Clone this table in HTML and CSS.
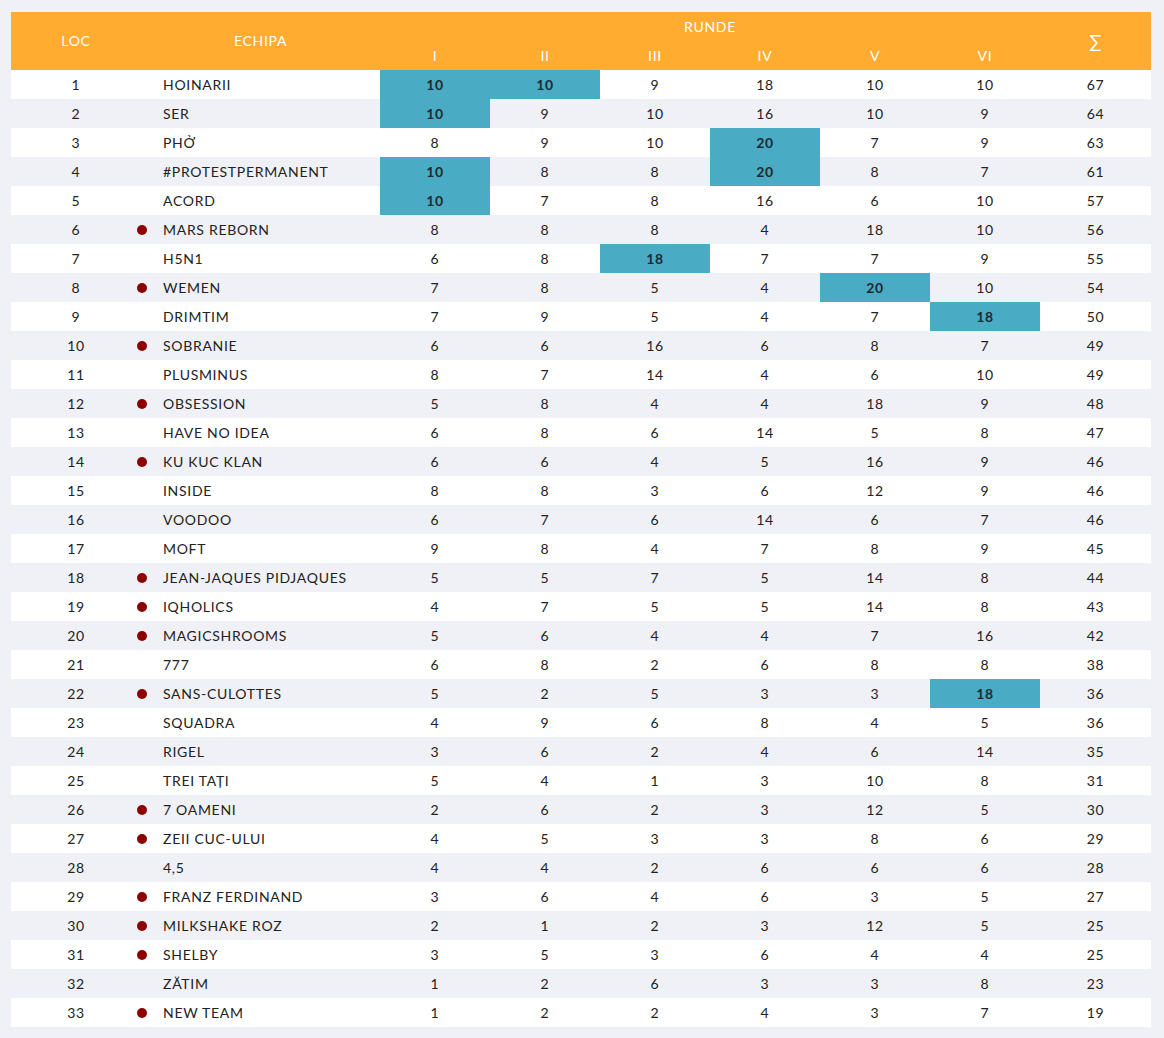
FILE: index.html
```html
<!DOCTYPE html>
<html>
<head>
<meta charset="utf-8">
<link rel="stylesheet" href="styles.css">
</head>
<body>
<table class="standings">
<colgroup>
<col class="c-loc"><col class="c-team"><col class="c-r"><col class="c-r"><col class="c-r"><col class="c-r"><col class="c-r"><col class="c-r"><col class="c-sum">
</colgroup>
<thead>
<tr><th rowspan="2">LOC</th><th rowspan="2">ECHIPA</th><th colspan="6" class="runde">RUNDE</th><th rowspan="2" class="sigma">∑</th></tr>
<tr class="rn"><th>I</th><th>II</th><th>III</th><th>IV</th><th>V</th><th>VI</th></tr>
</thead>
<tbody>
<tr><td>1</td><td class="team">HOINARII</td><td class="hl">10</td><td class="hl">10</td><td>9</td><td>18</td><td>10</td><td>10</td><td>67</td></tr>
<tr><td>2</td><td class="team">SER</td><td class="hl">10</td><td>9</td><td>10</td><td>16</td><td>10</td><td>9</td><td>64</td></tr>
<tr><td>3</td><td class="team">PHỞ</td><td>8</td><td>9</td><td>10</td><td class="hl">20</td><td>7</td><td>9</td><td>63</td></tr>
<tr><td>4</td><td class="team">#PROTESTPERMANENT</td><td class="hl">10</td><td>8</td><td>8</td><td class="hl">20</td><td>8</td><td>7</td><td>61</td></tr>
<tr><td>5</td><td class="team">ACORD</td><td class="hl">10</td><td>7</td><td>8</td><td>16</td><td>6</td><td>10</td><td>57</td></tr>
<tr><td>6</td><td class="team dot">MARS REBORN</td><td>8</td><td>8</td><td>8</td><td>4</td><td>18</td><td>10</td><td>56</td></tr>
<tr><td>7</td><td class="team">H5N1</td><td>6</td><td>8</td><td class="hl">18</td><td>7</td><td>7</td><td>9</td><td>55</td></tr>
<tr><td>8</td><td class="team dot">WEMEN</td><td>7</td><td>8</td><td>5</td><td>4</td><td class="hl">20</td><td>10</td><td>54</td></tr>
<tr><td>9</td><td class="team">DRIMTIM</td><td>7</td><td>9</td><td>5</td><td>4</td><td>7</td><td class="hl">18</td><td>50</td></tr>
<tr><td>10</td><td class="team dot">SOBRANIE</td><td>6</td><td>6</td><td>16</td><td>6</td><td>8</td><td>7</td><td>49</td></tr>
<tr><td>11</td><td class="team">PLUSMINUS</td><td>8</td><td>7</td><td>14</td><td>4</td><td>6</td><td>10</td><td>49</td></tr>
<tr><td>12</td><td class="team dot">OBSESSION</td><td>5</td><td>8</td><td>4</td><td>4</td><td>18</td><td>9</td><td>48</td></tr>
<tr><td>13</td><td class="team">HAVE NO IDEA</td><td>6</td><td>8</td><td>6</td><td>14</td><td>5</td><td>8</td><td>47</td></tr>
<tr><td>14</td><td class="team dot">KU KUC KLAN</td><td>6</td><td>6</td><td>4</td><td>5</td><td>16</td><td>9</td><td>46</td></tr>
<tr><td>15</td><td class="team">INSIDE</td><td>8</td><td>8</td><td>3</td><td>6</td><td>12</td><td>9</td><td>46</td></tr>
<tr><td>16</td><td class="team">VOODOO</td><td>6</td><td>7</td><td>6</td><td>14</td><td>6</td><td>7</td><td>46</td></tr>
<tr><td>17</td><td class="team">MOFT</td><td>9</td><td>8</td><td>4</td><td>7</td><td>8</td><td>9</td><td>45</td></tr>
<tr><td>18</td><td class="team dot">JEAN-JAQUES PIDJAQUES</td><td>5</td><td>5</td><td>7</td><td>5</td><td>14</td><td>8</td><td>44</td></tr>
<tr><td>19</td><td class="team dot">IQHOLICS</td><td>4</td><td>7</td><td>5</td><td>5</td><td>14</td><td>8</td><td>43</td></tr>
<tr><td>20</td><td class="team dot">MAGICSHROOMS</td><td>5</td><td>6</td><td>4</td><td>4</td><td>7</td><td>16</td><td>42</td></tr>
<tr><td>21</td><td class="team">777</td><td>6</td><td>8</td><td>2</td><td>6</td><td>8</td><td>8</td><td>38</td></tr>
<tr><td>22</td><td class="team dot">SANS-CULOTTES</td><td>5</td><td>2</td><td>5</td><td>3</td><td>3</td><td class="hl">18</td><td>36</td></tr>
<tr><td>23</td><td class="team">SQUADRA</td><td>4</td><td>9</td><td>6</td><td>8</td><td>4</td><td>5</td><td>36</td></tr>
<tr><td>24</td><td class="team">RIGEL</td><td>3</td><td>6</td><td>2</td><td>4</td><td>6</td><td>14</td><td>35</td></tr>
<tr><td>25</td><td class="team">TREI TAȚI</td><td>5</td><td>4</td><td>1</td><td>3</td><td>10</td><td>8</td><td>31</td></tr>
<tr><td>26</td><td class="team dot">7 OAMENI</td><td>2</td><td>6</td><td>2</td><td>3</td><td>12</td><td>5</td><td>30</td></tr>
<tr><td>27</td><td class="team dot">ZEII CUC-ULUI</td><td>4</td><td>5</td><td>3</td><td>3</td><td>8</td><td>6</td><td>29</td></tr>
<tr><td>28</td><td class="team">4,5</td><td>4</td><td>4</td><td>2</td><td>6</td><td>6</td><td>6</td><td>28</td></tr>
<tr><td>29</td><td class="team dot">FRANZ FERDINAND</td><td>3</td><td>6</td><td>4</td><td>6</td><td>3</td><td>5</td><td>27</td></tr>
<tr><td>30</td><td class="team dot">MILKSHAKE ROZ</td><td>2</td><td>1</td><td>2</td><td>3</td><td>12</td><td>5</td><td>25</td></tr>
<tr><td>31</td><td class="team dot">SHELBY</td><td>3</td><td>5</td><td>3</td><td>6</td><td>4</td><td>4</td><td>25</td></tr>
<tr><td>32</td><td class="team">ZĂTIM</td><td>1</td><td>2</td><td>6</td><td>3</td><td>3</td><td>8</td><td>23</td></tr>
<tr><td>33</td><td class="team dot">NEW TEAM</td><td>1</td><td>2</td><td>2</td><td>4</td><td>3</td><td>7</td><td>19</td></tr>
</tbody>
</table>
</body>
</html>
```

FILE: styles.css
```css
html, body {
  margin: 0;
  padding: 0;
  background: #f0f1f6;
}
body {
  padding: 12px 13px 11px 11px;
  font-family: Lato, "Open Sans", sans-serif;
  font-size: 14px;
  color: #222;
}
.standings {
  border-collapse: collapse;
  border-spacing: 0;
  table-layout: fixed;
  width: 1140px;
}
.c-loc { width: 130px; }
.c-team { width: 239px; }
.c-r { width: 110px; }
.c-sum { width: 111px; }
.standings th {
  background: #ffac30;
  color: #fff;
  font-weight: normal;
  font-size: 14px;
  letter-spacing: 0.7px;
  height: 29px;
  line-height: 18px;
  padding: 0;
  text-align: center;
  vertical-align: middle;
}
.standings th.sigma { font-size: 18px; line-height: 22px; }
.standings td {
  height: 29px;
  line-height: 18px;
  padding: 0;
  text-align: center;
  vertical-align: middle;
  letter-spacing: 0.7px;
}
.standings tbody tr:nth-child(odd) td { background: #fff; }
.standings tbody tr:nth-child(even) td { background: #f0f1f6; }
.standings td.team {
  text-align: left;
  padding-left: 22px;
  position: relative;
}
.standings td.dot::before {
  content: "";
  position: absolute;
  left: -4px;
  top: 10px;
  width: 10px;
  height: 10px;
  border-radius: 50%;
  background: #8b0000;
}
.standings tbody tr td.hl {
  background: #4aabc5;
  font-weight: bold;
  color: #1f2a30;
}
```
